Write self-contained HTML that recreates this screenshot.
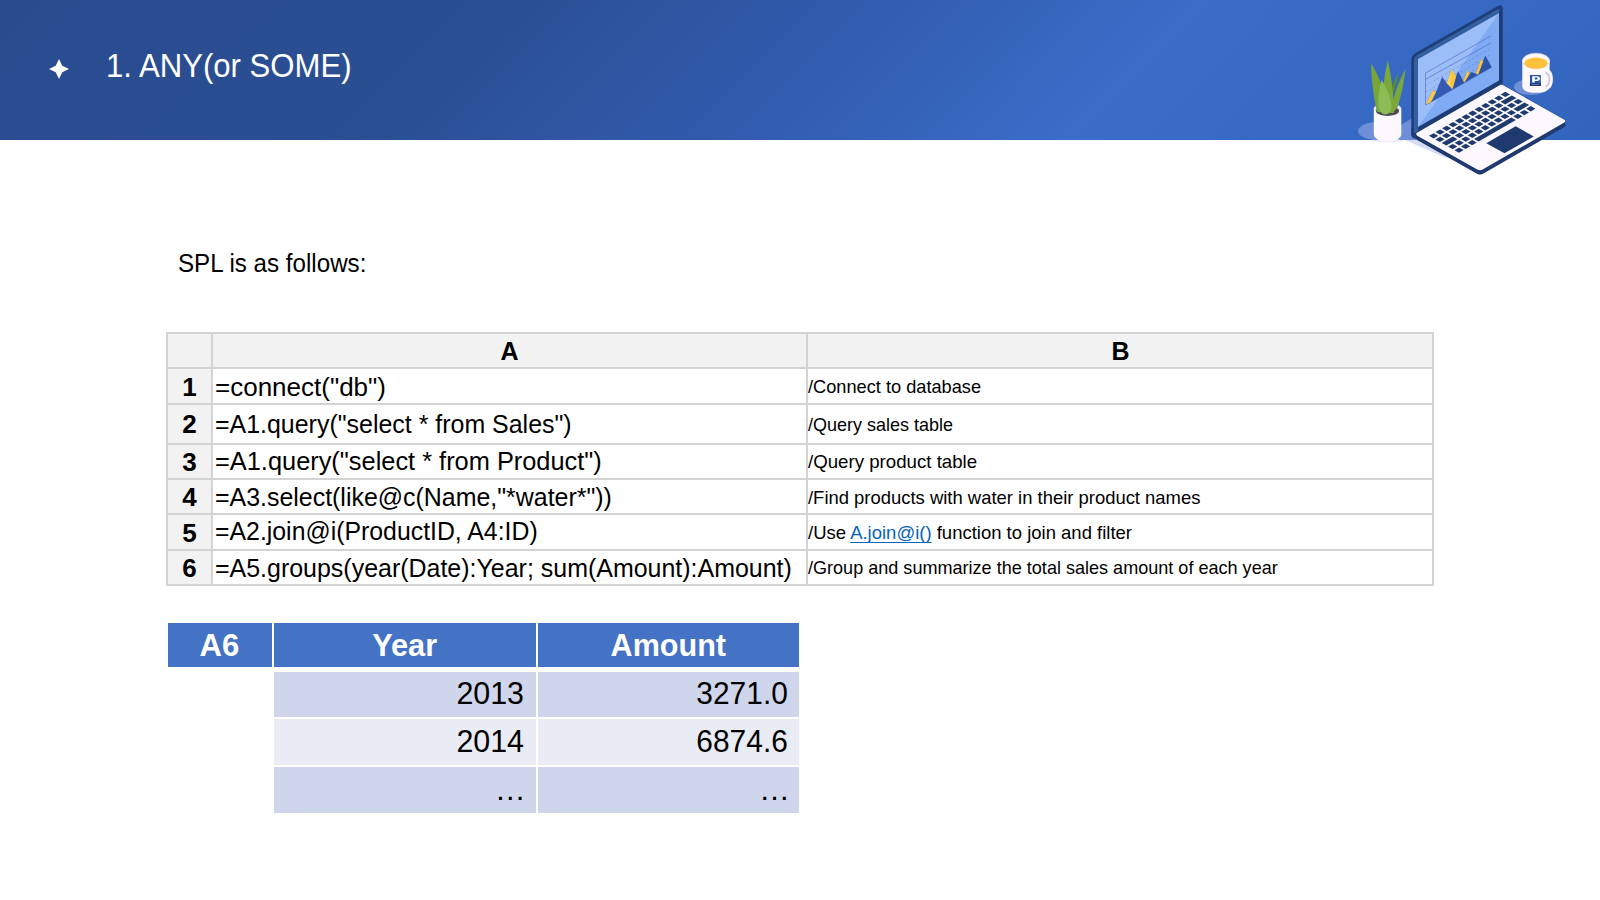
<!DOCTYPE html>
<html><head><meta charset="utf-8">
<style>
html,body{margin:0;padding:0;background:#fff;}
body{width:1600px;height:900px;position:relative;overflow:hidden;font-family:"Liberation Sans",sans-serif;}
#hdr{position:absolute;left:0;top:0;width:1600px;height:140px;background:linear-gradient(135deg,#2a4c8f 0%,#2b4f94 30%,#315cae 50%,#3a6cc8 69%,#3468c2 90%,#3165bd 100%);}
.grid{position:absolute;background:#d3d3d3;}
.cell{position:absolute;}
.t{position:absolute;white-space:nowrap;line-height:1;color:#000;}
.lnk{color:#0563c1;text-decoration:underline;text-decoration-thickness:1px;text-underline-offset:3px;text-decoration-skip-ink:none;}
</style></head>
<body>
<div id="hdr"></div>
<svg style="position:absolute;left:48.2px;top:57.7px" width="22" height="22" viewBox="0 0 22 22">
  <path d="M11,1 L14.3,7.7 L21,11 L14.3,14.3 L11,21 L7.7,14.3 L1,11 L7.7,7.7Z" fill="#fff"/>
</svg>

<!-- upper grid -->
<div class="cell" style="left:166px;top:332px;width:1268px;height:37px;background:#f2f2f2"></div>
<div class="cell" style="left:166px;top:332px;width:46px;height:254px;background:#f2f2f2"></div>
<div class="grid" style="left:166px;top:332px;width:1268px;height:2px"></div>
<div class="grid" style="left:166px;top:367px;width:1268px;height:2px"></div>
<div class="grid" style="left:166px;top:403px;width:1268px;height:2px"></div>
<div class="grid" style="left:166px;top:443px;width:1268px;height:2px"></div>
<div class="grid" style="left:166px;top:478px;width:1268px;height:2px"></div>
<div class="grid" style="left:166px;top:513px;width:1268px;height:2px"></div>
<div class="grid" style="left:166px;top:549px;width:1268px;height:2px"></div>
<div class="grid" style="left:166px;top:584px;width:1268px;height:2px"></div>
<div class="grid" style="left:166px;top:332px;width:2px;height:254px"></div>
<div class="grid" style="left:211px;top:332px;width:2px;height:254px"></div>
<div class="grid" style="left:806px;top:332px;width:2px;height:254px"></div>
<div class="grid" style="left:1432px;top:332px;width:2px;height:254px"></div>

<!-- lower table -->
<div class="cell" style="left:168px;top:623px;width:104px;height:44px;background:#4472c4"></div>
<div class="cell" style="left:274px;top:623px;width:262px;height:44px;background:#4472c4"></div>
<div class="cell" style="left:538px;top:623px;width:261px;height:44px;background:#4472c4"></div>
<div class="cell" style="left:274px;top:672px;width:262px;height:45px;background:#cfd5ea"></div>
<div class="cell" style="left:538px;top:672px;width:261px;height:45px;background:#cfd5ea"></div>
<div class="cell" style="left:274px;top:719px;width:262px;height:46px;background:#e9ebf5"></div>
<div class="cell" style="left:538px;top:719px;width:261px;height:46px;background:#e9ebf5"></div>
<div class="cell" style="left:274px;top:767px;width:262px;height:46px;background:#cfd5ea"></div>
<div class="cell" style="left:538px;top:767px;width:261px;height:46px;background:#cfd5ea"></div>

<div class="t" style="left:106.19px;top:48.70px;font-size:33.3px;font-weight:400;color:#fff;transform:scaleX(0.9350);transform-origin:0 0;">1. ANY(or SOME)</div>
<div class="t" style="left:178.14px;top:249.90px;font-size:26px;font-weight:400;color:#000;transform:scaleX(0.9290);transform-origin:0 0;">SPL is as follows:</div>
<div class="t" style="left:509.60px;top:338.75px;font-size:25px;font-weight:700;color:#000;transform-origin:0 0;transform:translateX(-50%) scaleX(1.0000);">A</div>
<div class="t" style="left:1120.60px;top:338.75px;font-size:25px;font-weight:700;color:#000;transform-origin:0 0;transform:translateX(-50%) scaleX(1.0000);">B</div>
<div class="t" style="left:189.50px;top:373.90px;font-size:26px;font-weight:700;color:#000;transform-origin:0 0;transform:translateX(-50%) scaleX(1.0000);">1</div>
<div class="t" style="left:189.50px;top:410.90px;font-size:26px;font-weight:700;color:#000;transform-origin:0 0;transform:translateX(-50%) scaleX(1.0000);">2</div>
<div class="t" style="left:189.50px;top:448.90px;font-size:26px;font-weight:700;color:#000;transform-origin:0 0;transform:translateX(-50%) scaleX(1.0000);">3</div>
<div class="t" style="left:189.50px;top:483.90px;font-size:26px;font-weight:700;color:#000;transform-origin:0 0;transform:translateX(-50%) scaleX(1.0000);">4</div>
<div class="t" style="left:189.50px;top:519.90px;font-size:26px;font-weight:700;color:#000;transform-origin:0 0;transform:translateX(-50%) scaleX(1.0000);">5</div>
<div class="t" style="left:189.50px;top:554.90px;font-size:26px;font-weight:700;color:#000;transform-origin:0 0;transform:translateX(-50%) scaleX(1.0000);">6</div>
<div class="t" style="left:215.00px;top:373.90px;font-size:26px;font-weight:400;color:#000;">=connect(&quot;db&quot;)</div>
<div class="t" style="left:215.04px;top:410.90px;font-size:26px;font-weight:400;color:#000;transform:scaleX(0.9593);transform-origin:0 0;">=A1.query(&quot;select * from Sales&quot;)</div>
<div class="t" style="left:215.02px;top:447.90px;font-size:26px;font-weight:400;color:#000;transform:scaleX(0.9759);transform-origin:0 0;">=A1.query(&quot;select * from Product&quot;)</div>
<div class="t" style="left:215.04px;top:483.90px;font-size:26px;font-weight:400;color:#000;transform:scaleX(0.9586);transform-origin:0 0;">=A3.select(like@c(Name,&quot;*water*&quot;))</div>
<div class="t" style="left:215.04px;top:517.90px;font-size:26px;font-weight:400;color:#000;transform:scaleX(0.9552);transform-origin:0 0;">=A2.join@i(ProductID, A4:ID)</div>
<div class="t" style="left:215.04px;top:554.90px;font-size:26px;font-weight:400;color:#000;transform:scaleX(0.9599);transform-origin:0 0;">=A5.groups(year(Date):Year; sum(Amount):Amount)</div>
<div class="t" style="left:808.30px;top:376.85px;font-size:19px;font-weight:400;color:#000;transform:scaleX(0.9583);transform-origin:0 0;">/Connect to database</div>
<div class="t" style="left:808.30px;top:415.35px;font-size:19px;font-weight:400;color:#000;transform:scaleX(0.9474);transform-origin:0 0;">/Query sales table</div>
<div class="t" style="left:808.30px;top:451.85px;font-size:19px;font-weight:400;color:#000;transform:scaleX(0.9825);transform-origin:0 0;">/Query product table</div>
<div class="t" style="left:808.30px;top:487.85px;font-size:19px;font-weight:400;color:#000;transform:scaleX(0.9703);transform-origin:0 0;">/Find products with water in their product names</div>
<div class="t" style="left:808.30px;top:523.35px;font-size:19px;font-weight:400;color:#000;transform:scaleX(0.9730);transform-origin:0 0;">/Use <span class="lnk">A.join@i()</span> function to join and filter</div>
<div class="t" style="left:808.30px;top:558.35px;font-size:19px;font-weight:400;color:#000;transform:scaleX(0.9504);transform-origin:0 0;">/Group and summarize the total sales amount of each year</div>
<div class="t" style="left:220.00px;top:628.80px;font-size:32px;font-weight:700;color:#fff;transform-origin:0 0;transform:translateX(-50%) scaleX(0.9692);">A6</div>
<div class="t" style="left:405.50px;top:628.80px;font-size:32px;font-weight:700;color:#fff;transform-origin:0 0;transform:translateX(-50%) scaleX(0.9606);">Year</div>
<div class="t" style="left:671.00px;top:628.80px;font-size:32px;font-weight:700;color:#fff;transform-origin:0 0;transform:translateX(-50%) scaleX(0.9550);">Amount</div>
<div class="t" style="right:1075.80px;top:677.65px;font-size:31px;font-weight:400;color:#000;transform:scaleX(0.9800);transform-origin:100% 0;">2013</div>
<div class="t" style="right:812.50px;top:677.65px;font-size:31px;font-weight:400;color:#000;transform:scaleX(0.9645);transform-origin:100% 0;">3271.0</div>
<div class="t" style="right:1075.80px;top:725.65px;font-size:31px;font-weight:400;color:#000;transform:scaleX(0.9800);transform-origin:100% 0;">2014</div>
<div class="t" style="right:812.50px;top:725.65px;font-size:31px;font-weight:400;color:#000;transform:scaleX(0.9645);transform-origin:100% 0;">6874.6</div>
<div class="t" style="right:1074.20px;top:773.65px;font-size:31px;font-weight:400;color:#000;">&hellip;</div>
<div class="t" style="right:810.10px;top:773.65px;font-size:31px;font-weight:400;color:#000;">&hellip;</div>


<!-- illustration -->
<svg style="position:absolute;left:1340px;top:0px" width="260" height="190" viewBox="1340 0 260 190">
  <!-- shadows on white -->
  <polygon points="1405,140 1416,138 1451,156.5 1446,158" fill="#d6dcf5"/>
  <ellipse cx="1387" cy="140.5" rx="16" ry="1.8" fill="#e8e8f8"/>
  <!-- pot shadow -->
  <ellipse cx="1377" cy="131" rx="19" ry="9" fill="#6e8ed8"/>
  <!-- lid shadow -->
  <polygon points="1400,125.5 1416,116 1416,140 1400,140" fill="#6e8ed8"/>
  <!-- mug shadow -->
  <ellipse cx="1531" cy="87" rx="17" ry="8" fill="#6e8ed8"/>

  <!-- plant -->
  <!-- pot -->
  <path d="M1373.8,108 L1373.8,134 C1373.8,139 1380,141.5 1387.5,141.5 C1395,141.5 1401.3,139 1401.3,134 L1401.3,108Z" fill="#fdf8fd"/>
  <ellipse cx="1387.5" cy="108.5" rx="13.7" ry="5.2" fill="#ebe2f2"/>
  <ellipse cx="1387.5" cy="111" rx="11.6" ry="5" fill="#4d4b57"/>
  <path d="M1371,63.5 C1377,72 1382,84 1384,97 L1385,112 L1377,112 C1374,100 1371.5,82 1371,63.5Z" fill="#77a53a"/>
  <path d="M1399,72 C1397,82 1394,92 1391,101 L1389,112 L1385,112 C1387,98 1392,84 1399,72Z" fill="#5a8c2f"/>
  <path d="M1387.8,60 C1390,70 1392.5,86 1393.5,100 L1394,113 L1382,113 C1382,96 1384,76 1387.8,60Z" fill="#7aa83b"/>
  <path d="M1405.6,69 C1404,82 1401,96 1398,106 C1396,110 1393,113 1390,113 C1392,100 1399,80 1405.6,69Z" fill="#7aa83b"/>
  <path d="M1381.7,80 C1386,87 1390,95 1391,103 C1392,109 1390,114 1386,114.5 C1381,114.5 1378.5,110 1378.3,103 C1378.2,95 1379.5,87 1381.7,80Z" fill="#8dbb56"/>

  <!-- deck base thickness -->
  <g transform="matrix(6.52,-3.76,6.37,3.58,1433.6,139.6)">
    <rect x="-1.3" y="-1.9" width="13.4" height="10.55" rx="0.5" ry="0.5" fill="#1e3a6e"/>
  </g>
  <g transform="matrix(6.52,-3.76,6.37,3.58,1433.6,135.8)">
    <rect x="-1.3" y="-1.9" width="13.4" height="10.55" rx="0.5" ry="0.5" fill="#1e3a6e"/>
    <rect x="-1.22" y="-1.9" width="13.3" height="10.45" rx="0.45" ry="0.45" fill="#fcf8fe"/>
    <g fill="#1e3a6e"><rect x="-0.36" y="-0.36" width="0.72" height="0.72"/><rect x="0.64" y="-0.36" width="0.72" height="0.72"/><rect x="1.64" y="-0.36" width="0.72" height="0.72"/><rect x="2.64" y="-0.36" width="0.72" height="0.72"/><rect x="3.64" y="-0.36" width="0.72" height="0.72"/><rect x="4.64" y="-0.36" width="0.72" height="0.72"/><rect x="5.64" y="-0.36" width="0.72" height="0.72"/><rect x="6.64" y="-0.36" width="0.72" height="0.72"/><rect x="7.64" y="-0.36" width="0.72" height="0.72"/><rect x="8.64" y="-0.36" width="0.72" height="0.72"/><rect x="9.64" y="-0.36" width="0.72" height="0.72"/><rect x="10.64" y="-0.36" width="0.72" height="0.72"/><rect x="-0.36" y="0.64" width="0.72" height="0.72"/><rect x="0.64" y="0.64" width="0.72" height="0.72"/><rect x="1.64" y="0.64" width="0.72" height="0.72"/><rect x="2.64" y="0.64" width="0.72" height="0.72"/><rect x="3.64" y="0.64" width="0.72" height="0.72"/><rect x="4.64" y="0.64" width="0.72" height="0.72"/><rect x="5.64" y="0.64" width="0.72" height="0.72"/><rect x="6.64" y="0.64" width="0.72" height="0.72"/><rect x="7.64" y="0.64" width="0.72" height="0.72"/><rect x="8.64" y="0.64" width="0.72" height="0.72"/><rect x="9.64" y="0.64" width="1.72" height="0.72"/><rect x="-0.36" y="1.64" width="1.72" height="0.72"/><rect x="1.64" y="1.64" width="0.72" height="0.72"/><rect x="2.64" y="1.64" width="0.72" height="0.72"/><rect x="3.64" y="1.64" width="0.72" height="0.72"/><rect x="4.64" y="1.64" width="0.72" height="0.72"/><rect x="5.64" y="1.64" width="0.72" height="0.72"/><rect x="6.64" y="1.64" width="0.72" height="0.72"/><rect x="7.64" y="1.64" width="0.72" height="0.72"/><rect x="8.64" y="1.64" width="0.72" height="0.72"/><rect x="9.64" y="1.64" width="0.72" height="0.72"/><rect x="10.64" y="1.64" width="0.72" height="0.72"/><rect x="-0.36" y="2.64" width="0.72" height="0.72"/><rect x="0.64" y="2.64" width="0.72" height="0.72"/><rect x="1.64" y="2.64" width="0.72" height="0.72"/><rect x="2.64" y="2.64" width="0.72" height="0.72"/><rect x="3.64" y="2.64" width="0.72" height="0.72"/><rect x="4.64" y="2.64" width="0.72" height="0.72"/><rect x="5.64" y="2.64" width="0.72" height="0.72"/><rect x="6.64" y="2.64" width="0.72" height="0.72"/><rect x="7.64" y="2.64" width="0.72" height="0.72"/><rect x="8.64" y="2.64" width="0.72" height="0.72"/><rect x="9.64" y="2.64" width="1.72" height="0.72"/><rect x="-0.36" y="3.64" width="0.72" height="0.72"/><rect x="0.64" y="3.64" width="0.72" height="0.72"/><rect x="1.64" y="3.64" width="0.72" height="0.72"/><rect x="2.64" y="3.64" width="5.72" height="0.72"/><rect x="8.64" y="3.64" width="0.72" height="0.72"/><rect x="9.64" y="3.64" width="0.72" height="0.72"/><rect x="10.64" y="3.64" width="0.72" height="0.72"/>
    <rect x="3.0" y="5.2" width="4.5" height="2.85"/>
    </g>
  </g>
  <polygon points="1411.3,128 1415,128 1417,137.5 1413.5,138.5 1411.3,136" fill="#1d3d74"/>
  <!-- lid -->
  <path d="M1411.3,60.5 Q1411.3,55.5 1415.6,53 L1497.5,6.2 Q1502.7,3.2 1502.7,9.2 L1502.7,83.5 L1413.5,134.8 Q1411.3,136 1411.3,133 Z" fill="#1d3d74"/>
  <path d="M1413.8,60.5 Q1413.8,57 1417,55.3 L1497.5,9.3 Q1499.6,8.2 1499.6,10.5 L1499,13.3 L1418,59.3 L1418,131 L1413.8,133.5Z" fill="#335e9f"/>
  <polygon points="1418,59.3 1499,13.3 1499,80.5 1418,127" fill="#7eabf3"/>
  <polygon points="1418,59.3 1499,13.3 1418,127" fill="#9bbdf8"/>
  <!-- chart grid -->
  <g stroke="#5a6ac8" stroke-width="0.65" fill="none">
    <polyline points="1425.5,105.1 1425.5,73.1 1491.1,35.8"/>
    <line x1="1425.5" y1="79.3" x2="1491" y2="42.9"/>
    <line x1="1425.5" y1="105.1" x2="1491.6" y2="67.3"/>
  </g>
  <g stroke="#7a6ab8" stroke-width="0.7" fill="none" stroke-dasharray="2,2.5" opacity="0.7">
    <line x1="1425.5" y1="85.6" x2="1491" y2="48.2"/>
    <line x1="1425.5" y1="92.2" x2="1491" y2="54.4"/>
    <line x1="1425.5" y1="98" x2="1491" y2="60.7"/>
  </g>
  <!-- area -->
  <polygon points="1426,105 1433,90 1436,92 1442.2,77.1 1446.7,83.3 1451.6,69.6 1456,76.2 1458.2,71.8 1463.1,81.1 1467.6,70.4 1469.8,73.6 1471.6,72.2 1475.6,73.6 1481.3,58.4 1483.1,61.6 1485.3,55.8 1491.6,67.3" fill="#3b64bd"/>
  <polygon points="1442.2,77.1 1451.1,89.6 1433.3,101.1" fill="#2d55a8" opacity="0.6"/>
  <polygon points="1458.2,71.8 1464,82.4 1452.4,89" fill="#2b53a6"/>
  <polygon points="1485.3,55.8 1491.6,67.3 1478,74.5" fill="#2b53a6"/>
  <polygon points="1471.6,72.2 1476.9,74.4 1464.4,82.4" fill="#2b53a6"/>
  <!-- yellow -->
  <polygon points="1425.8,104.7 1432.9,90 1436,92.2 1431,102" fill="#ffc83f"/>
  <polygon points="1446.7,83.3 1451.6,69.6 1456,76.2 1452.4,89.1" fill="#ffd55e"/>
  <polygon points="1451.6,69.6 1456,76.2 1452.4,89.1 1450,85" fill="#ffc43c"/>
  <polygon points="1463.1,81.1 1467.6,70.4 1469.8,73.6 1464.4,82.4" fill="#ffc43c"/>
  <polygon points="1475.6,73.6 1481.3,58.4 1483.1,61.6 1478.2,74.4" fill="#ffc43c"/>

  <!-- mug -->
  <path d="M1548,69.5 C1554.5,70.5 1554.5,88 1548,89 Z" fill="#fdf8fd"/>
  <path d="M1522.3,61 L1522.3,86 C1522.3,91 1528,92.8 1536,92.8 C1544,92.8 1549.6,91 1549.6,86 L1549.6,61Z" fill="#fdf8fd"/>
  <path d="M1545.5,72.5 C1550.8,74.5 1550.8,84.5 1545.5,86.5" stroke="#c4c0d8" stroke-width="1.4" fill="none"/>
  <ellipse cx="1536" cy="61" rx="13.7" ry="7.8" fill="#fdf8fd" stroke="#d8d0e4" stroke-width="0.7"/>
  <ellipse cx="1536" cy="63.2" rx="11.6" ry="5.6" fill="#ffc13a"/>
  <rect x="1530" y="75" width="10.8" height="10.8" fill="#2456b0"/>
  <rect x="1530" y="83.6" width="10.8" height="2.2" fill="#14265a"/>
  <path d="M1532.2,82.6 L1532.2,76.3 L1537.6,76.3 C1539.3,76.3 1539.9,77.5 1539.9,78.6 C1539.9,79.9 1539.1,80.9 1537.6,80.9 L1534.8,80.9 L1534.8,82.6Z M1534.8,77.6 L1534.8,79.4 L1536.8,79.4 C1537.4,79.4 1537.6,79 1537.6,78.5 C1537.6,78 1537.4,77.6 1536.8,77.6Z" fill="#fff" fill-rule="evenodd"/>
  <rect x="1531.5" y="84.4" width="7.8" height="0.6" fill="#9aa4c8"/>
</svg>
</body></html>
